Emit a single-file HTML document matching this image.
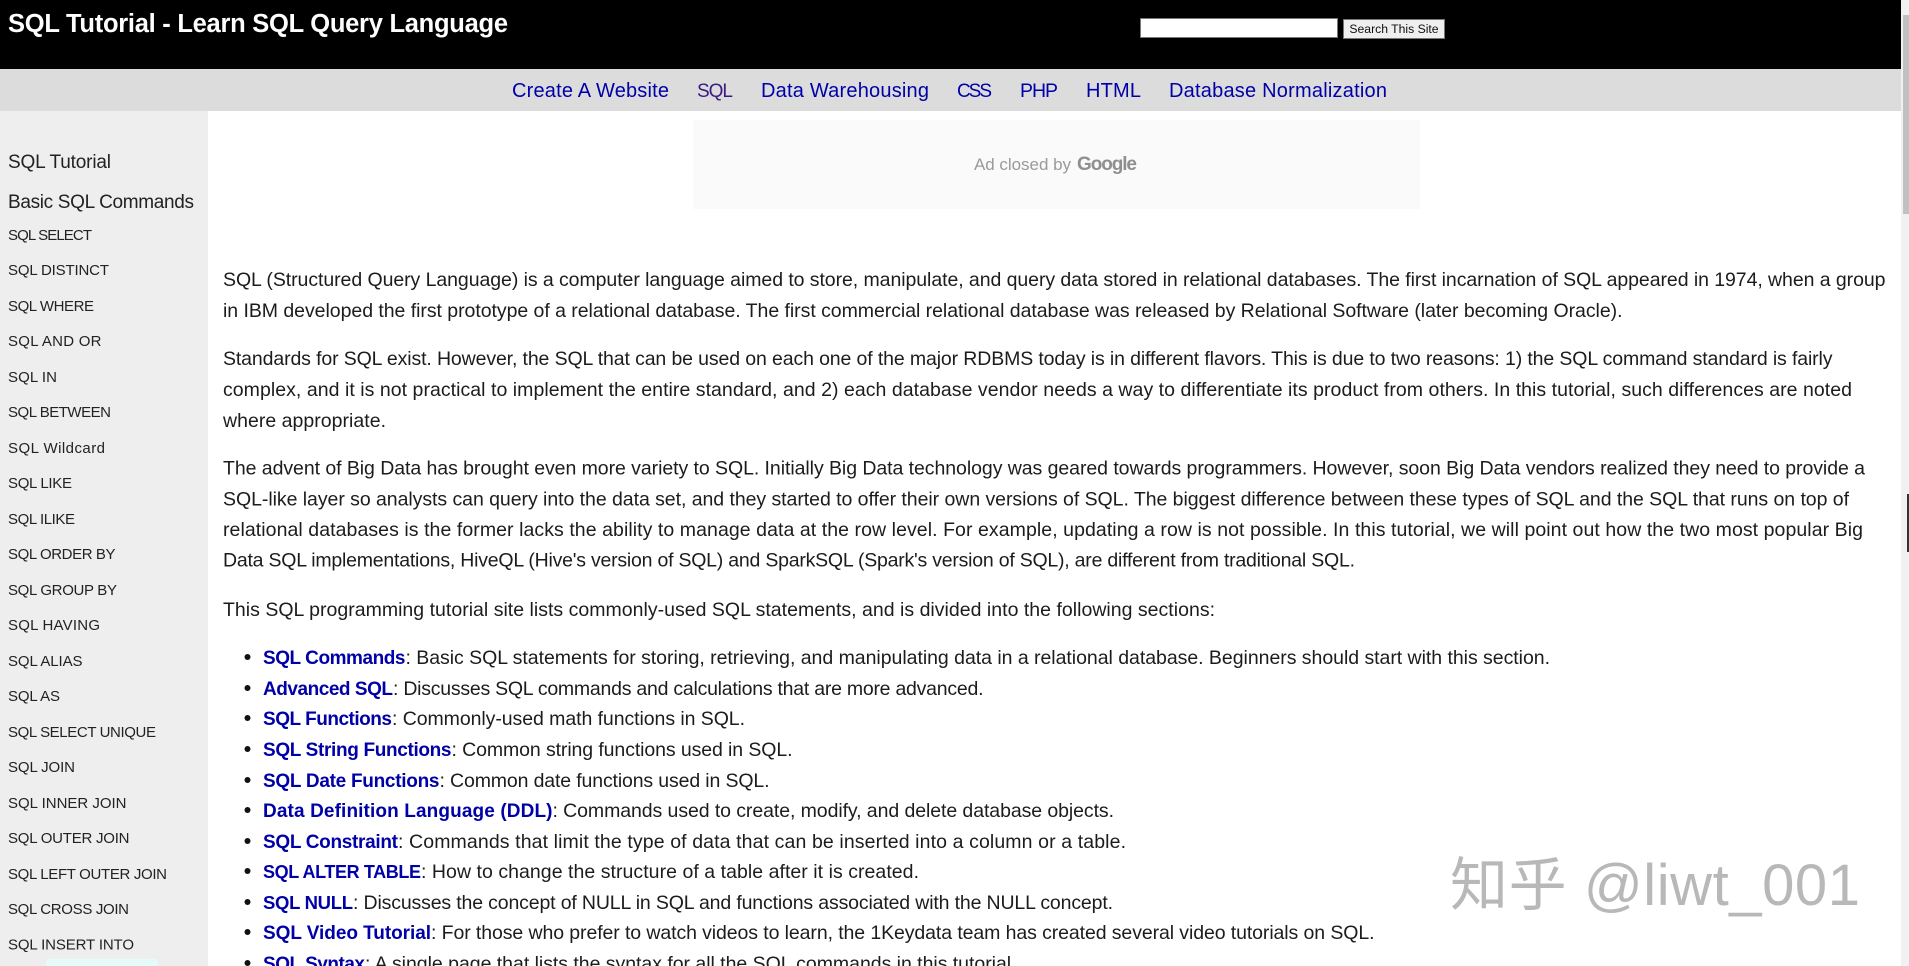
<!DOCTYPE html>
<html lang="en"><head><meta charset="utf-8"><title>SQL Tutorial - Learn SQL Query Language</title>
<style>
html,body{margin:0;padding:0;width:1909px;height:966px;overflow:hidden;background:#fff}
svg{position:absolute;left:0;top:0;display:block}
text{font-family:"Liberation Sans",sans-serif;white-space:pre}
.b{font-size:19.5px;fill:#1c1c1c}
.l{font-size:19px;font-weight:bold;fill:#0000a8}
.n{font-size:20px;fill:#0000a8}
.s{font-size:15px;fill:#222}
.h{font-size:19px;fill:#222}
input{position:absolute;box-sizing:border-box;margin:0}
</style></head><body>
<svg width="1909" height="966" viewBox="0 0 1909 966" xmlns="http://www.w3.org/2000/svg">
<rect x="0" y="69" width="1901" height="42" fill="#dcdcdc"/>
<rect x="0" y="0" width="1901" height="69" fill="#000"/>
<rect x="0" y="111" width="208" height="855" fill="#eeeeee"/>
<rect x="1901" y="0" width="8" height="966" fill="#f1f1f1"/>
<rect x="1903" y="15" width="6" height="199" fill="#c1c1c1"/>
<rect x="1907" y="494" width="2" height="58" fill="#333"/>
<path d="M46 966v-3q0-4 4-4h104q4 0 4 4v3z" fill="#e6fafa"/>

<text x="8" y="32" font-size="25.5" font-weight="bold" fill="#fff" textLength="500">SQL Tutorial - Learn SQL Query Language</text>

<text class="n" x="512" y="97" textLength="157">Create A Website</text>
<text class="n" x="697" y="97" textLength="36" style="fill:#3c1a80;font-size:19px">SQL</text>
<text class="n" x="761" y="97" textLength="168">Data Warehousing</text>
<text class="n" x="957" y="97" textLength="35" style="font-size:19px">CSS</text>
<text class="n" x="1020" y="97" textLength="38" style="font-size:19.5px">PHP</text>
<text class="n" x="1086" y="97" textLength="55">HTML</text>
<text class="n" x="1169" y="97" textLength="218">Database Normalization</text>

<text class="h" x="8" y="168" textLength="103">SQL Tutorial</text>
<text class="h" x="8" y="208" textLength="186">Basic SQL Commands</text>
<text class="s" x="8" y="240" textLength="84">SQL SELECT</text>
<text class="s" x="8" y="275" textLength="101">SQL DISTINCT</text>
<text class="s" x="8" y="311" textLength="86">SQL WHERE</text>
<text class="s" x="8" y="346" textLength="93.5">SQL AND OR</text>
<text class="s" x="8" y="382" textLength="49">SQL IN</text>
<text class="s" x="8" y="417" textLength="103">SQL BETWEEN</text>
<text class="s" x="8" y="453" textLength="97">SQL Wildcard</text>
<text class="s" x="8" y="488" textLength="64">SQL LIKE</text>
<text class="s" x="8" y="524" textLength="67">SQL ILIKE</text>
<text class="s" x="8" y="559" textLength="107.500">SQL ORDER BY</text>
<text class="s" x="8" y="595" textLength="109">SQL GROUP BY</text>
<text class="s" x="8" y="630" textLength="92">SQL HAVING</text>
<text class="s" x="8" y="666" textLength="74.500">SQL ALIAS</text>
<text class="s" x="8" y="701" textLength="52">SQL AS</text>
<text class="s" x="8" y="737" textLength="148">SQL SELECT UNIQUE</text>
<text class="s" x="8" y="772" textLength="67">SQL JOIN</text>
<text class="s" x="8" y="808" textLength="118.500">SQL INNER JOIN</text>
<text class="s" x="8" y="843" textLength="121.500">SQL OUTER JOIN</text>
<text class="s" x="8" y="879" textLength="159">SQL LEFT OUTER JOIN</text>
<text class="s" x="8" y="914" textLength="121">SQL CROSS JOIN</text>
<text class="s" x="8" y="949.500" textLength="126">SQL INSERT INTO</text>

<rect x="693" y="120" width="727" height="89" fill="#fafafa"/>
<text x="974" y="170" font-size="17" fill="#9a9a9a" textLength="97">Ad closed by</text>
<text x="1077" y="170" font-size="19" font-weight="bold" fill="#8f8f8f" textLength="60">Google</text>

<text class="b" x="223" y="286" textLength="1662.500">SQL (Structured Query Language) is a computer language aimed to store, manipulate, and query data stored in relational databases. The first incarnation of SQL appeared in 1974, when a group</text>
<text class="b" x="223" y="317" textLength="1399.500">in IBM developed the first prototype of a relational database. The first commercial relational database was released by Relational Software (later becoming Oracle).</text>
<text class="b" x="223" y="365" textLength="1609.500">Standards for SQL exist. However, the SQL that can be used on each one of the major RDBMS today is in different flavors. This is due to two reasons: 1) the SQL command standard is fairly</text>
<text class="b" x="223" y="396" textLength="1629">complex, and it is not practical to implement the entire standard, and 2) each database vendor needs a way to differentiate its product from others. In this tutorial, such differences are noted</text>
<text class="b" x="223" y="427" textLength="163">where appropriate.</text>
<text class="b" x="223" y="474.500" textLength="1642">The advent of Big Data has brought even more variety to SQL. Initially Big Data technology was geared towards programmers. However, soon Big Data vendors realized they need to provide a</text>
<text class="b" x="223" y="505.500" textLength="1626">SQL-like layer so analysts can query into the data set, and they started to offer their own versions of SQL. The biggest difference between these types of SQL and the SQL that runs on top of</text>
<text class="b" x="223" y="536" textLength="1640">relational databases is the former lacks the ability to manage data at the row level. For example, updating a row is not possible. In this tutorial, we will point out how the two most popular Big</text>
<text class="b" x="223" y="566.500" textLength="1132">Data SQL implementations, HiveQL (Hive's version of SQL) and SparkSQL (Spark's version of SQL), are different from traditional SQL.</text>
<text class="b" x="223" y="616" textLength="992">This SQL programming tutorial site lists commonly-used SQL statements, and is divided into the following sections:</text>

<g fill="#111">
<circle cx="247.500" cy="657" r="3"/><circle cx="247.500" cy="688" r="3"/><circle cx="247.500" cy="718" r="3"/><circle cx="247.500" cy="749" r="3"/><circle cx="247.500" cy="780" r="3"/><circle cx="247.500" cy="810" r="3"/><circle cx="247.500" cy="841" r="3"/><circle cx="247.500" cy="871" r="3"/><circle cx="247.500" cy="902" r="3"/><circle cx="247.500" cy="932" r="3"/><circle cx="247.500" cy="963" r="3"/>
</g>
<text class="l" x="263" y="664" textLength="142.500">SQL Commands</text><text class="b" x="405.500" y="664" textLength="1144.500">: Basic SQL statements for storing, retrieving, and manipulating data in a relational database. Beginners should start with this section.</text>
<text class="l" x="263" y="695" textLength="130">Advanced SQL</text><text class="b" x="393" y="695" textLength="590.500">: Discusses SQL commands and calculations that are more advanced.</text>
<text class="l" x="263" y="725" textLength="129">SQL Functions</text><text class="b" x="392" y="725" textLength="353">: Commonly-used math functions in SQL.</text>
<text class="l" x="263" y="756" textLength="188.500">SQL String Functions</text><text class="b" x="451.500" y="756" textLength="341">: Common string functions used in SQL.</text>
<text class="l" x="263" y="787" textLength="176.500">SQL Date Functions</text><text class="b" x="439.500" y="787" textLength="330">: Common date functions used in SQL.</text>
<text class="l" x="263" y="817" textLength="289.500">Data Definition Language (DDL)</text><text class="b" x="552.500" y="817" textLength="561.500">: Commands used to create, modify, and delete database objects.</text>
<text class="l" x="263" y="848" textLength="135">SQL Constraint</text><text class="b" x="398" y="848" textLength="728">: Commands that limit the type of data that can be inserted into a column or a table.</text>
<text class="l" x="263" y="878" textLength="158" style="font-size:18px">SQL ALTER TABLE</text><text class="b" x="421" y="878" textLength="498">: How to change the structure of a table after it is created.</text>
<text class="l" x="263" y="909" textLength="90" style="font-size:18.500px">SQL NULL</text><text class="b" x="353" y="909" textLength="760">: Discusses the concept of NULL in SQL and functions associated with the NULL concept.</text>
<text class="l" x="263" y="939" textLength="168">SQL Video Tutorial</text><text class="b" x="431" y="939" textLength="943.500">: For those who prefer to watch videos to learn, the 1Keydata team has created several video tutorials on SQL.</text>
<text class="l" x="263" y="970" textLength="102">SQL Syntax</text><text class="b" x="365" y="970" textLength="651.500">: A single page that lists the syntax for all the SQL commands in this tutorial.</text>

<text x="1450" y="905" font-size="58" fill="#b8b8b8" style="font-family:'Liberation Sans','Noto Sans CJK SC',sans-serif" textLength="410">知乎 @liwt_001</text>
</svg>
<input type="text" style="left:1140px;top:18px;width:198px;height:20px;background:#fff;border:1px solid #777">
<input type="button" value="Search This Site" style="left:1343px;top:19px;width:102px;height:20px;padding:0;background:#efefef;border:1px solid #777;color:#111;font:12.2px 'Liberation Sans',sans-serif">
</body></html>
